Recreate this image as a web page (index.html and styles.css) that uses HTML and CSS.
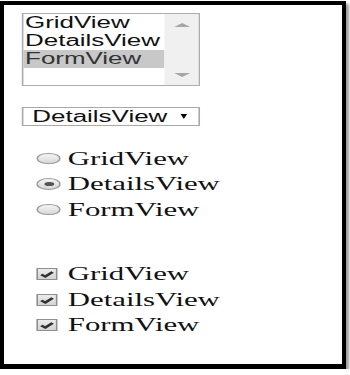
FILE: index.html
```html
<!DOCTYPE html>
<html lang="en">
<head>
    <meta charset="UTF-8">
    <title>Data controls</title>
    <link rel="stylesheet" href="styles.css">
</head>
<body>
    <div class="frame">
        <!-- the captured page is stretched sideways, so the whole sheet is scaled -->
        <div class="sheet">
            <div class="listbox">
                <div class="options">
                    <div class="option">GridView</div>
                    <div class="option">DetailsView</div>
                    <div class="option selected">FormView</div>
                </div>
                <div class="scrollbar">
                    <svg class="arrow" width="10" height="4" viewBox="0 0 10 4"><polygon points="0,4 5,0 10,4" /></svg>
                    <svg class="arrow" width="10" height="4" viewBox="0 0 10 4"><polygon points="0,0 5,4 10,0" /></svg>
                </div>
            </div>

            <div class="dropdown">
                <span>DetailsView</span>
                <span class="caret"></span>
            </div>

            <div class="choices radios">
                <span class="radio"></span><span class="label">GridView</span>
                <span class="radio checked"></span><span class="label">DetailsView</span>
                <span class="radio"></span><span class="label">FormView</span>
            </div>

            <div class="choices checks">
                <span class="check"><svg width="13" height="12" viewBox="0 0 13 12"><polyline points="3,6.5 5.5,8.5 10,4" /></svg></span><span class="label">GridView</span>
                <span class="check"><svg width="13" height="12" viewBox="0 0 13 12"><polyline points="3,6.5 5.5,8.5 10,4" /></svg></span><span class="label">DetailsView</span>
                <span class="check"><svg width="13" height="12" viewBox="0 0 13 12"><polyline points="3,6.5 5.5,8.5 10,4" /></svg></span><span class="label">FormView</span>
            </div>
        </div>
    </div>
</body>
</html>
```

FILE: styles.css
```css
body {
    margin: 0;
    background: #fff;
}
.frame {
    margin-top: 1px;
    width: 346px;
    height: 368px;
    box-sizing: border-box;
    border: 4px solid #000;
    border-bottom-width: 5px;
    box-shadow: 3px 3px 3px #9a9a9a;
    overflow: hidden;
    background: #fff;
}
.sheet {
    width: 205px;
    padding: 8px 0 0 11px;
    transform: scaleX(1.62);
    transform-origin: 0 0;
    color: #111;
}
.listbox {
    display: flex;
    width: 110px;
    height: 73px;
    box-sizing: border-box;
    border: 1px solid #abadb3;
    font-family: "Liberation Sans", Arial, sans-serif;
    font-size: 16px;
}
.options {
    flex: 1;
}
.option {
    height: 18px;
    line-height: 18px;
    padding-left: 1px;
}
.option.selected {
    background: #c8c8c8;
    color: #333;
}
.scrollbar {
    width: 21px;
    background: #f0f0f0;
    display: flex;
    flex-direction: column;
    justify-content: space-between;
    align-items: center;
    padding: 9px 0 8px;
}
.arrow polygon {
    fill: #a6a6a6;
}
.dropdown {
    margin-top: 21px;
    width: 110px;
    height: 19px;
    box-sizing: border-box;
    border: 1px solid #a9a9a9;
    display: flex;
    align-items: center;
    justify-content: space-between;
    padding: 0 7px 0 5.5px;
    font-family: "Liberation Sans", Arial, sans-serif;
    font-size: 16px;
}
.caret {
    width: 0;
    height: 0;
    border-left: 2.6px solid transparent;
    border-right: 2.6px solid transparent;
    border-top: 5.5px solid #000;
}
.choices {
    display: grid;
    grid-template-columns: 19px auto;
    grid-auto-rows: 25.5px;
    align-items: center;
    justify-content: start;
    padding-left: 9.4px;
    font-family: "Liberation Serif", "Times New Roman", serif;
    font-size: 19px;
}
.radios {
    margin-top: 19.75px;
}
.checks {
    margin-top: 39px;
}
.radio {
    display: flex;
    align-items: center;
    justify-content: center;
    width: 14.8px;
    height: 11.5px;
    box-sizing: border-box;
    border: 1px solid #9c9c9c;
    border-radius: 50%;
    background: linear-gradient(#f4f4f4, #d8d8d8);
}
.radio.checked::after {
    content: "";
    width: 6px;
    height: 4.5px;
    border-radius: 50%;
    background: #555;
}
.check {
    display: block;
    width: 13px;
    height: 12px;
    box-sizing: border-box;
    border: 1px solid #8f8f8f;
    background: linear-gradient(#ececec, #d4d4d4);
}
.check svg {
    display: block;
    margin: -1px;
}
.check polyline {
    fill: none;
    stroke: #333;
    stroke-width: 2.2;
}
.label {
    white-space: nowrap;
}
```
